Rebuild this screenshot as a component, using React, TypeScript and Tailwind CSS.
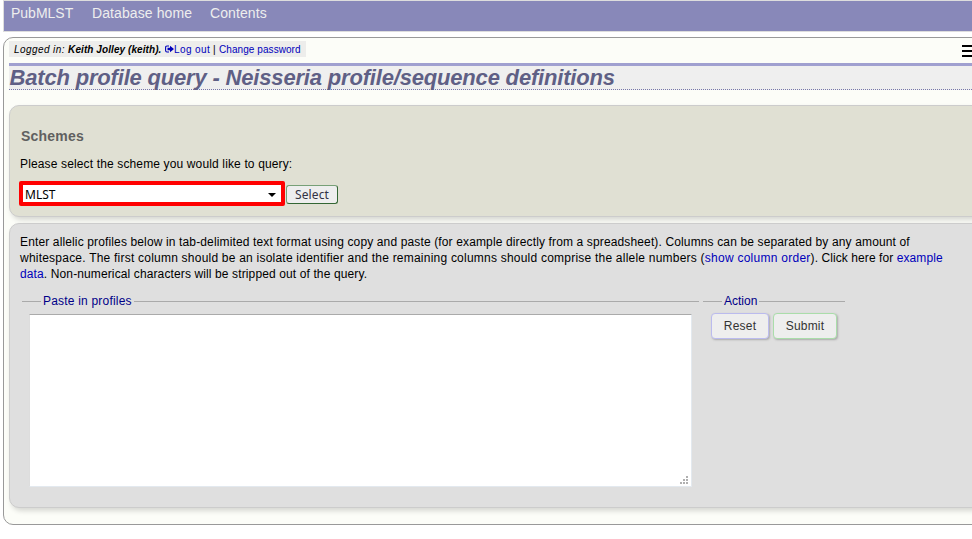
import React from 'react';

function Link({ children, className = '' }: { children: React.ReactNode; className?: string }) {
  return <a href="#" className={`text-[#0000bb] ${className}`}>{children}</a>;
}

function Rule({ className }: { className: string }) {
  return <span className={`h-px bg-[#aaaaaa] ${className}`} />;
}

export default function App() {
  return (
    <div className="h-[539px] w-[972px] overflow-hidden bg-white pl-[3px] font-['Liberation_Sans',Arial,sans-serif] text-black">
      <nav className="flex h-8 w-[980px] gap-[18px] border border-[#dddddd] bg-[#8888b9] pl-[7px] text-[14px] leading-[24px] whitespace-nowrap text-[#eeeeee]">
        <a href="#" className="w-[63px]">PubMLST</a>
        <a href="#" className="w-[100px] tracking-[0.1px]">Database home</a>
        <a href="#" className="tracking-[0.1px]">Contents</a>
      </nav>
      <main className="mt-[5px] h-[488px] w-[980px] rounded-[10px] border border-[#999999] bg-[#fcfdf8] pt-[3px] pl-[5px]">
        <div className="flex h-[22px] items-start justify-between">
          <div className="flex h-4 w-[297px] bg-[#ededeb] pl-[5px] text-[10px] leading-[17px] whitespace-nowrap">
            <i className="w-[151px] tracking-[0.42px]">Logged in: <b className="tracking-[0.08px]">Keith Jolley (keith).</b></i>
            <svg className="mt-1 h-[9px] w-[9px]" viewBox="0 0 9 9">
              <path d="M4 1H2Q.6 1 .6 2.4v3.2Q.6 7 2 7h2" fill="none" stroke="#0000bb" strokeWidth="1.1" />
              <path d="M2.5 2.8H5V.8L9 4 5 7.2V5.2H2.5z" fill="#0000bb" />
            </svg>
            <Link className="w-[39px] tracking-[0.4px]">Log out</Link>
            <span className="w-[6px]">|</span>
            <Link className="tracking-[0.07px]">Change password</Link>
          </div>
          <div className="mt-1 flex w-[20px] flex-col gap-[3px]">
            <span className="h-[2px] bg-black" />
            <span className="h-[2px] bg-black" />
            <span className="h-[2px] bg-black" />
          </div>
        </div>
        <h1 className="h-[27px] border-t-[3px] border-b border-t-[#a0a0d0] border-b-[#7777aa] bg-[#efefef] pl-[0.5px] text-[22px] leading-[23px] font-bold tracking-[-0.18px] whitespace-nowrap text-[#5f5f85] italic [border-bottom-style:dotted]">
          Batch profile query - Neisseria profile/sequence definitions
        </h1>
        <section className="mt-[15px] h-[112px] rounded-[10px] border border-[#cccccc] bg-[#e0e0d3] pl-[10px] shadow-[2px_3px_5px_rgba(0,0,0,0.15)]">
          <h2 className="mt-[22px] pl-px text-[14px] leading-4 font-bold tracking-[0.2px] text-[#606060]">Schemes</h2>
          <p className="mt-3 text-[12px] leading-4 tracking-[0.14px]">Please select the scheme you would like to query:</p>
          <div className="mt-[9px] flex gap-px">
            <div className="ml-[-1px] flex h-[25px] w-[266px] items-center justify-between rounded-[2px] border-4 border-[#ff0000] bg-white pr-[5px] pl-[2px] font-['Noto_Sans','DejaVu_Sans',sans-serif] text-[12px] leading-4">
              <span className="mt-[2px]">MLST</span>
              <svg className="mt-[3px] h-1 w-2" viewBox="0 0 8 4"><path d="M0 0h8L4 4z" /></svg>
            </div>
            <button className="mt-1 h-[19px] w-[52px] rounded-[3px] border border-t-[#77a077] border-r-[#336633] border-b-[#336633] border-l-[#77a077] bg-[#eeeeee] font-['Noto_Sans','DejaVu_Sans',sans-serif] text-[12px] leading-4 tracking-[0.1px] text-[#333344]">Select</button>
          </div>
        </section>
        <section className="mt-[6px] h-[285px] rounded-[10px] border border-[#cccccc] bg-[#dfdfdf] pt-[10px] pl-[10px] text-[12px] shadow-[2px_3px_5px_rgba(0,0,0,0.15)]">
          <p className="leading-4 whitespace-nowrap">
            <span className="block tracking-[0.135px]">Enter allelic profiles below in tab-delimited text format using copy and paste (for example directly from a spreadsheet). Columns can be separated by any amount of</span>
            <span className="block tracking-[0.08px]"><span className="tracking-[0.222px]">whitespace. The first column should be an isolate identifier and the remaining columns should comprise the allele numbers (</span><Link className="tracking-[0.26px]">show column order</Link>). Click here for <Link>example</Link></span>
            <span className="block tracking-[0.12px]"><Link>data</Link>. Non-numerical characters will be stripped out of the query.</span>
          </p>
          <div className="mt-[11px] flex gap-1 pl-[2px] whitespace-nowrap">
            <fieldset className="w-[677px]">
              <div className="flex h-4 items-center gap-[2px] leading-4 text-[#000088]">
                <Rule className="w-[19px]" /><span className="tracking-[0.2px]">Paste in profiles</span><Rule className="flex-1" />
              </div>
              <textarea className="mt-[5px] ml-[7px] block h-[173px] w-[663px] resize-none border border-t-[#aaaaaa] border-r-[#e3e9ef] border-b-[#e3e9ef] border-l-[#dddddd] bg-white" />
              <svg className="relative mt-[-11px] ml-[658px] block h-2 w-2" viewBox="0 0 8 8" fill="#b0b0b0">
                <path d="M6 0h2v2H6zM3 3h2v2H3zM6 3h2v2H6zM0 6h2v2H0zM3 6h2v2H3zM6 6h2v2H6z" />
              </svg>
            </fieldset>
            <fieldset className="w-[142px]">
              <div className="flex h-4 items-center gap-[2px] leading-4 text-[#000088]">
                <Rule className="w-[19px]" /><span>Action</span><Rule className="flex-1" />
              </div>
              <div className="mt-1 ml-2 flex gap-1 text-[#333333]">
                <button className="h-[26px] w-[58px] rounded-[4px] border border-[#bbbbee] bg-[#eeeeee] tracking-[0.2px] shadow-[1px_1px_2px_#aaaaaa]">Reset</button>
                <button className="h-[26px] w-[64px] rounded-[4px] border border-[#aaddaa] bg-[#eeeeee] tracking-[0.2px] shadow-[1px_1px_2px_#aaaaaa]">Submit</button>
              </div>
            </fieldset>
          </div>
        </section>
      </main>
    </div>
  );
}
